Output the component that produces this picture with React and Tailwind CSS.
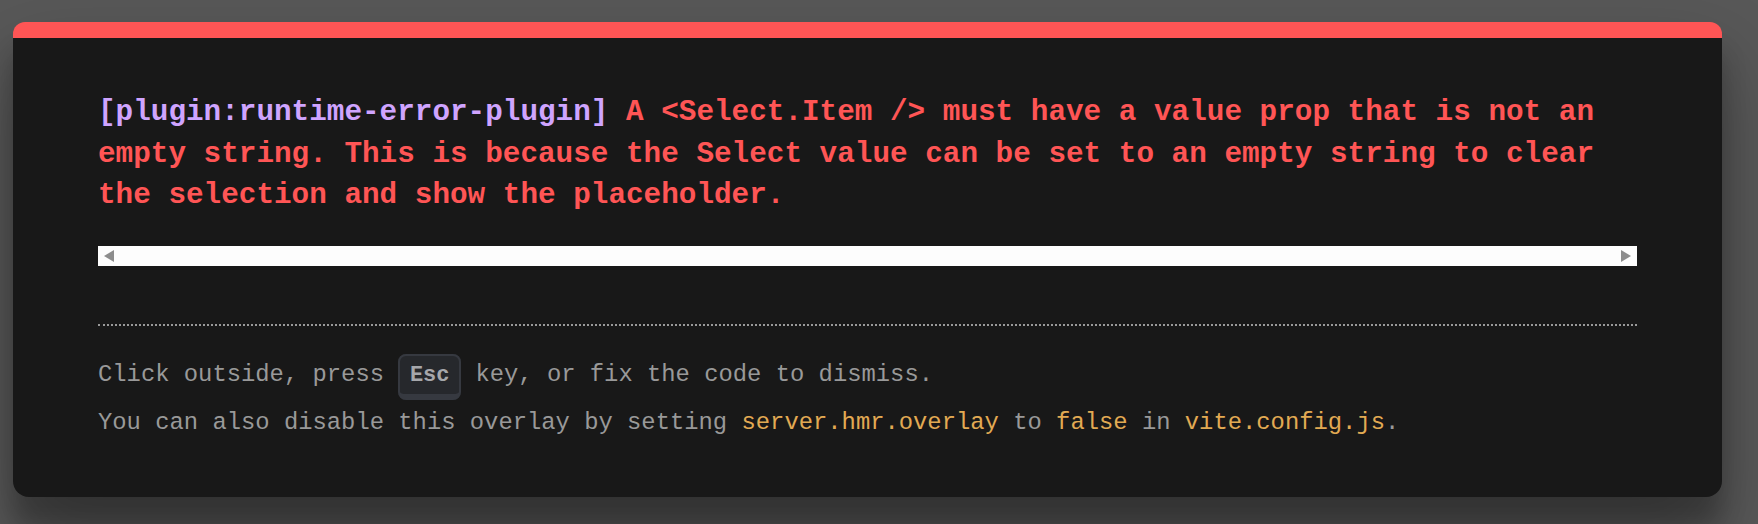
import React from 'react';

function ScrollTrack() {
  return (
    <div className="flex h-[20px] w-full items-center justify-between bg-[#fdfdfd] px-[6px]">
      <svg width="10" height="12" viewBox="0 0 10 12">
        <path d="M10 0 L10 12 L0 6 Z" fill="#8d8d8d" />
      </svg>
      <svg width="10" height="12" viewBox="0 0 10 12">
        <path d="M0 0 L0 12 L10 6 Z" fill="#8d8d8d" />
      </svg>
    </div>
  );
}

const code = "font-['Liberation_Mono',monospace] text-[#e2aa53]";

export default function App() {
  return (
    <div className="h-[524px] w-full overflow-hidden bg-[#585858] pt-[22px] font-['Liberation_Mono',monospace]">
      <div className="ml-[13px] w-[1709px] rounded-t-[12px] rounded-b-[16px] border-t-[16px] border-[#ff5555] bg-[#181818] px-[85px] pt-[54px] pb-[51px] shadow-[0_38px_76px_rgba(0,0,0,0.3),0_30px_24px_rgba(0,0,0,0.22)]">
        <pre className="m-0 mb-[29px] whitespace-pre-wrap font-['Liberation_Mono',monospace] text-[29.33px] font-bold leading-[41.6px]">
          <span className="text-[#cfa4ff]">[plugin:runtime-error-plugin] </span>
          <span className="text-[#ff5555]">
            A &lt;Select.Item /&gt; must have a value prop that is not an empty string. This is because the Select value can be set to an empty string to clear the selection and show the placeholder.
          </span>
        </pre>

        <ScrollTrack />

        {/* tip */}
        <div className="mt-[58px] border-t-2 border-dotted border-[#999] pt-[26px] text-[23.83px] leading-[46.8px] text-[#999]">
          Click outside, press{' '}
          <kbd className="rounded-[8px] border-x-2 border-t-2 border-b-[6px] border-[#363940] bg-[#26282c] px-[9.6px] py-[6.5px] font-['Liberation_Mono',monospace] text-[22px] font-bold text-[#a6a7ab]">
            Esc
          </kbd>{' '}
          key, or fix the code to dismiss.
          <br />
          You can also disable this overlay by setting{' '}
          <code className={code}>server.hmr.overlay</code> to{' '}
          <code className={code}>false</code> in{' '}
          <code className={code}>vite.config.js</code>.
        </div>
      </div>
    </div>
  );
}
